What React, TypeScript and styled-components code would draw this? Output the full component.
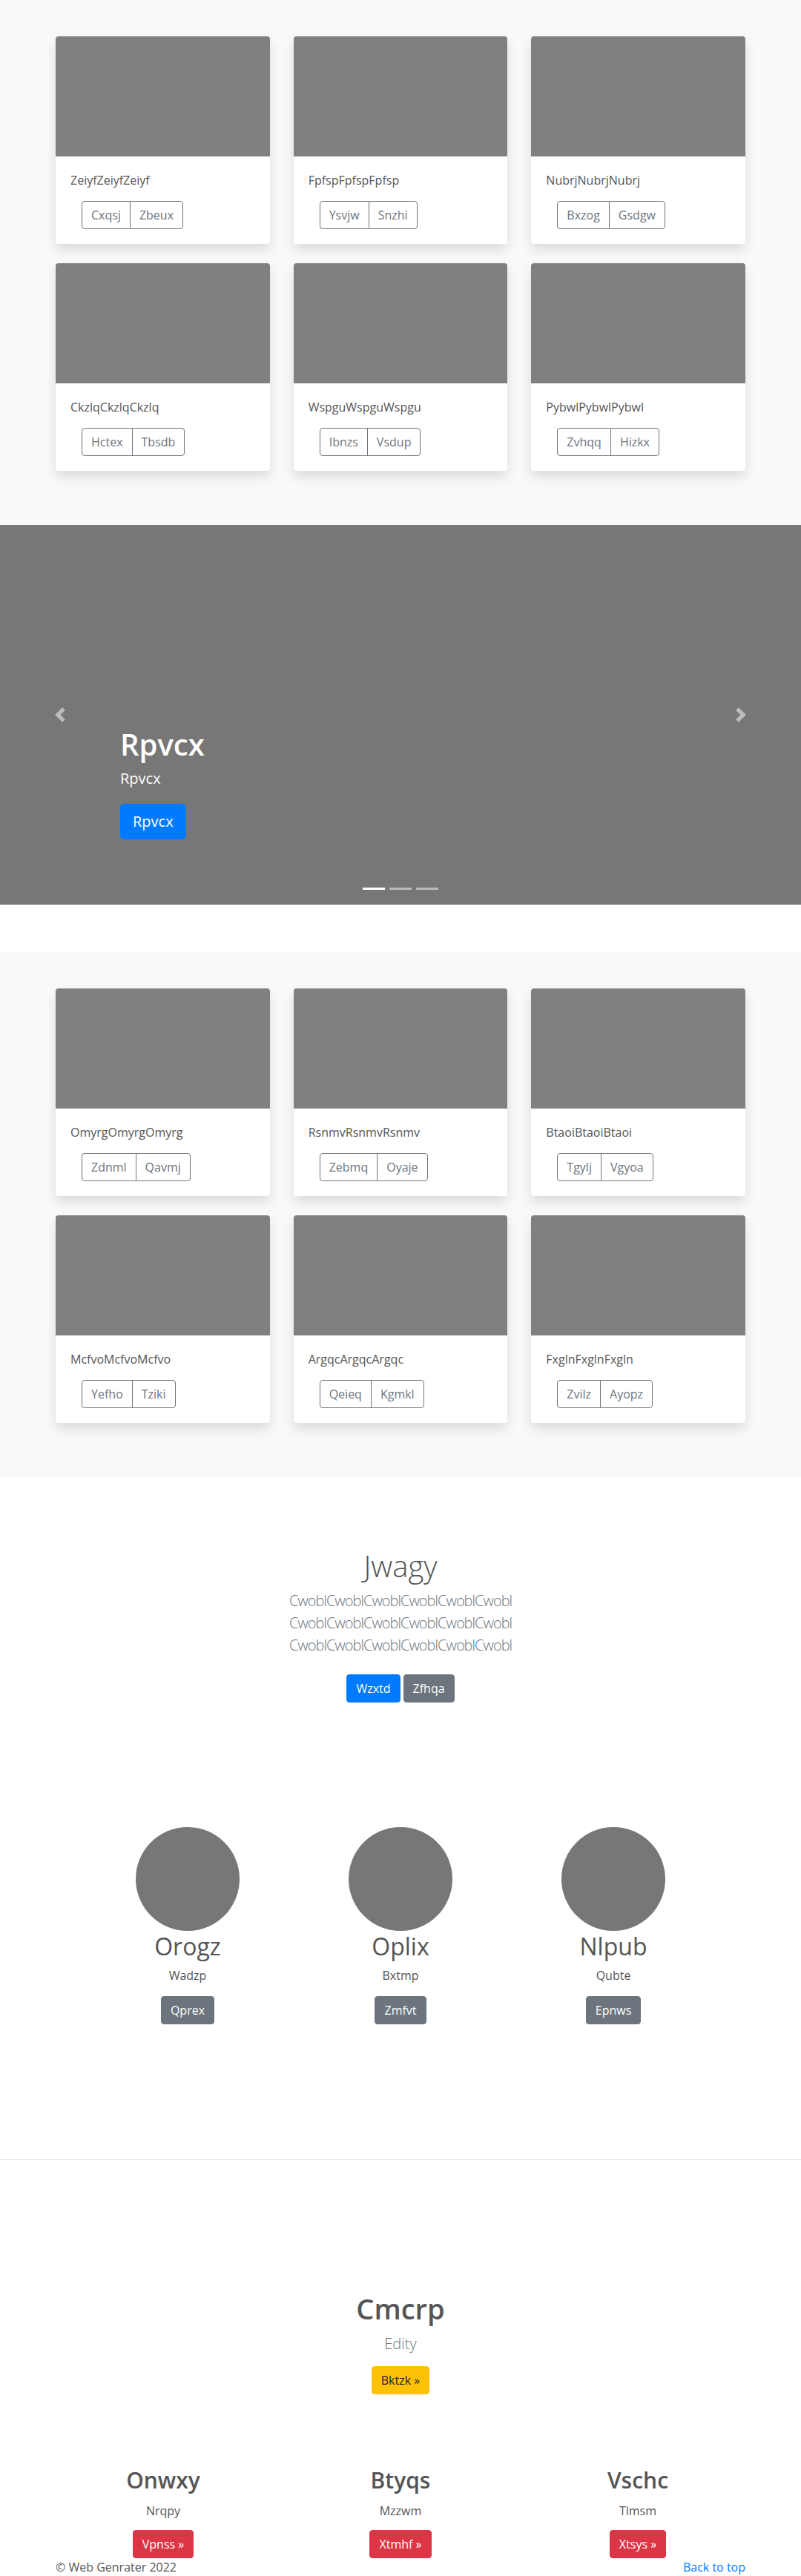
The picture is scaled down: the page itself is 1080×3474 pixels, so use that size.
import React from "react";
import styled, { createGlobalStyle } from "styled-components";

const GlobalStyle = createGlobalStyle`
  html, body { margin: 0; padding: 0; }
  body {
    font-family: "Open Sans", "Noto Sans", sans-serif;
    font-size: 16px;
    line-height: 1.5;
    color: #555;
    background: #fff;
  }
  * { box-sizing: border-box; }
  h1, h2, h3, p { margin: 0; }
`;

const Container = styled.div<{ $w?: number }>`
  width: ${(p) => p.$w ?? 930}px;
  margin: 0 auto;
`;

/* ---------- Album ---------- */
const AlbumSection = styled.section<{ $mt?: number }>`
  background: #f8f9fa;
  padding: 49px 0 49px;
  margin-top: ${(p) => p.$mt ?? 0}px;
`;

const CardGrid = styled.div`
  display: grid;
  grid-template-columns: repeat(3, 1fr);
  column-gap: 32px;
  row-gap: 26px;
  padding-bottom: 24px;
`;

const Card = styled.div`
  background: #fff;
  border-radius: 4px;
  height: 280px;
  overflow: hidden;
  box-shadow: 0 8px 16px rgba(0, 0, 0, 0.12);
  display: flex;
  flex-direction: column;
`;

const CardImage = styled.div`
  height: 162px;
  background: #808080;
`;

const CardBody = styled.div`
  padding: 20px;
`;

const CardText = styled.p`
  font-size: 16px;
  line-height: 24px;
  color: #555;
  margin-bottom: 16px;
`;

const BtnGroup = styled.div`
  display: inline-flex;
  margin-left: 15px;
`;

const OutlineBtn = styled.button`
  font-family: inherit;
  font-size: 16px;
  line-height: 24px;
  padding: 6px 12px;
  height: 38px;
  background: transparent;
  color: #6c757d;
  border: 1px solid #6c757d;
  border-radius: 0;
  &:first-child {
    border-radius: 4px 0 0 4px;
  }
  &:last-child {
    border-radius: 0 4px 4px 0;
    margin-left: -1px;
  }
`;

/* ---------- Carousel ---------- */
const Carousel = styled.div`
  position: relative;
  height: 512px;
  background: #777;
  overflow: hidden;
`;

const Caption = styled.div`
  position: absolute;
  left: 162px;
  bottom: 88px;
  color: #fff;
`;

const CaptionTitle = styled.h1`
  font-size: 40px;
  line-height: 48px;
  font-weight: 600;
  margin-bottom: 7px;
`;

const CaptionText = styled.p`
  font-size: 20px;
  line-height: 30px;
  margin-bottom: 19px;
`;

const Btn = styled.button<{ $bg: string; $fg?: string; $lg?: boolean }>`
  font-family: inherit;
  font-size: ${(p) => (p.$lg ? 20 : 16)}px;
  line-height: ${(p) => (p.$lg ? 30 : 24)}px;
  padding: ${(p) => (p.$lg ? "8px 16px" : "6px 12px")};
  background: ${(p) => p.$bg};
  color: ${(p) => p.$fg ?? "#fff"};
  border: 1px solid ${(p) => p.$bg};
  border-radius: ${(p) => (p.$lg ? 5 : 4)}px;
`;

const Control = styled.div<{ $side: "left" | "right" }>`
  position: absolute;
  top: 0;
  bottom: 0;
  ${(p) => p.$side}: 0;
  width: 15%;
  display: flex;
  align-items: center;
  justify-content: center;
  opacity: 0.5;
`;

const Indicators = styled.div`
  position: absolute;
  left: 0;
  right: 0;
  bottom: 20px;
  display: flex;
  justify-content: center;
  gap: 6px;
`;

const Indicator = styled.span<{ $active?: boolean }>`
  width: 30px;
  height: 3px;
  background: #fff;
  opacity: ${(p) => (p.$active ? 1 : 0.5)};
`;

/* ---------- Jumbotron ---------- */
const Jumbo = styled.section`
  padding: 96px 0 8px;
  text-align: center;
`;

const JumboTitle = styled.h1`
  font-size: 40px;
  line-height: 48px;
  font-weight: 300;
  color: #555;
  margin-bottom: 8px;
`;

const Lead = styled.p`
  font-size: 20px;
  line-height: 30px;
  font-weight: 300;
  letter-spacing: -1px;
  color: #6c757d;
  max-width: 500px;
  margin: 0 auto 16px;
`;

const BtnRow = styled.div`
  display: flex;
  justify-content: center;
  gap: 4px;
  padding-top: 8px;
`;

/* ---------- Marketing ---------- */
const Marketing = styled.div`
  display: grid;
  grid-template-columns: repeat(3, 287px);
  justify-content: center;
  padding-top: 160px;
  text-align: center;
`;

const Col = styled.div`
  display: flex;
  flex-direction: column;
  align-items: center;
`;

const Circle = styled.div`
  width: 140px;
  height: 140px;
  border-radius: 50%;
  background: #777;
  margin-bottom: 2px;
`;

const MarketTitle = styled.h2`
  font-size: 32px;
  line-height: 38px;
  font-weight: 400;
  color: #555;
  margin-bottom: 8px;
`;

const SmallText = styled.p`
  font-size: 16px;
  line-height: 24px;
  color: #555;
  margin-bottom: 16px;
`;

const Divider = styled.hr`
  margin: 182px 0 0;
  border: 0;
  border-top: 1px solid #e5e5e5;
`;

/* ---------- Feature ---------- */
const Feature = styled.section`
  padding-top: 177px;
  text-align: center;
  display: flex;
  flex-direction: column;
  align-items: center;
`;

const FeatureTitle = styled.h2`
  font-size: 38px;
  line-height: 46px;
  font-weight: 600;
  color: #555;
  margin-bottom: 10px;
`;

const FeatureLead = styled.p`
  font-size: 20px;
  line-height: 30px;
  font-weight: 300;
  color: #6c757d;
  margin-bottom: 15px;
`;

const BottomRow = styled.div`
  display: grid;
  grid-template-columns: repeat(3, 320px);
  justify-content: center;
  padding-top: 98px;
  text-align: center;
`;

const BottomTitle = styled.h2`
  font-size: 30px;
  line-height: 36px;
  font-weight: 600;
  color: #555;
  margin-bottom: 11px;
`;

const BottomText = styled.p`
  font-size: 16px;
  line-height: 24px;
  color: #555;
  margin-bottom: 14px;
`;

const Footer = styled.footer`
  display: flex;
  justify-content: space-between;
  font-size: 16px;
  line-height: 24px;
  color: #555;
`;

const FooterLink = styled.a`
  color: #007bff;
  text-decoration: none;
`;

type CardData = { title: string; btns: [string, string] };

const album1: CardData[] = [
  { title: "ZeiyfZeiyfZeiyf", btns: ["Cxqsj", "Zbeux"] },
  { title: "FpfspFpfspFpfsp", btns: ["Ysvjw", "Snzhi"] },
  { title: "NubrjNubrjNubrj", btns: ["Bxzog", "Gsdgw"] },
  { title: "CkzlqCkzlqCkzlq", btns: ["Hctex", "Tbsdb"] },
  { title: "WspguWspguWspgu", btns: ["Ibnzs", "Vsdup"] },
  { title: "PybwlPybwlPybwl", btns: ["Zvhqq", "Hizkx"] },
];

const album2: CardData[] = [
  { title: "OmyrgOmyrgOmyrg", btns: ["Zdnml", "Qavmj"] },
  { title: "RsnmvRsnmvRsnmv", btns: ["Zebmq", "Oyaje"] },
  { title: "BtaoiBtaoiBtaoi", btns: ["Tgylj", "Vgyoa"] },
  { title: "McfvoMcfvoMcfvo", btns: ["Yefho", "Tziki"] },
  { title: "ArgqcArgqcArgqc", btns: ["Qeieq", "Kgmkl"] },
  { title: "FxglnFxglnFxgln", btns: ["Zvilz", "Ayopz"] },
];

const Album: React.FC<{ items: CardData[]; mt?: number }> = ({ items, mt }) => (
  <AlbumSection $mt={mt}>
    <Container>
      <CardGrid>
        {items.map((c) => (
          <Card key={c.title}>
            <CardImage />
            <CardBody>
              <CardText>{c.title}</CardText>
              <BtnGroup>
                <OutlineBtn>{c.btns[0]}</OutlineBtn>
                <OutlineBtn>{c.btns[1]}</OutlineBtn>
              </BtnGroup>
            </CardBody>
          </Card>
        ))}
      </CardGrid>
    </Container>
  </AlbumSection>
);

const Chevron: React.FC<{ dir: "prev" | "next" }> = ({ dir }) => (
  <svg width="20" height="20" viewBox="0 0 8 8" fill="#fff">
    {dir === "prev" ? (
      <path d="M5.25 0l-4 4 4 4 1.5-1.5L4.25 4l2.5-2.5L5.25 0z" />
    ) : (
      <path d="M2.75 0l-1.5 1.5L3.75 4l-2.5 2.5L2.75 8l4-4-4-4z" />
    )}
  </svg>
);

const people = [
  { name: "Orogz", sub: "Wadzp", btn: "Qprex" },
  { name: "Oplix", sub: "Bxtmp", btn: "Zmfvt" },
  { name: "Nlpub", sub: "Qubte", btn: "Epnws" },
];

const bottoms = [
  { name: "Onwxy", sub: "Nrqpy", btn: "Vpnss »" },
  { name: "Btyqs", sub: "Mzzwm", btn: "Xtmhf »" },
  { name: "Vschc", sub: "Tlmsm", btn: "Xtsys »" },
];

export default function App() {
  return (
    <>
      <GlobalStyle />
      <Album items={album1} />

      <Carousel>
        <Control $side="left">
          <Chevron dir="prev" />
        </Control>
        <Control $side="right">
          <Chevron dir="next" />
        </Control>
        <Caption>
          <CaptionTitle>Rpvcx</CaptionTitle>
          <CaptionText>Rpvcx</CaptionText>
          <Btn $bg="#007bff" $lg>
            Rpvcx
          </Btn>
        </Caption>
        <Indicators>
          <Indicator $active />
          <Indicator />
          <Indicator />
        </Indicators>
      </Carousel>

      <Album items={album2} mt={64} />

      <Jumbo>
        <JumboTitle>Jwagy</JumboTitle>
        <Lead>
          CwoblCwoblCwoblCwoblCwoblCwobl CwoblCwoblCwoblCwoblCwoblCwobl
          CwoblCwoblCwoblCwoblCwoblCwobl
        </Lead>
        <BtnRow>
          <Btn $bg="#007bff">Wzxtd</Btn>
          <Btn $bg="#6c757d">Zfhqa</Btn>
        </BtnRow>
      </Jumbo>

      <Marketing>
        {people.map((p) => (
          <Col key={p.name}>
            <Circle />
            <MarketTitle>{p.name}</MarketTitle>
            <SmallText>{p.sub}</SmallText>
            <Btn $bg="#6c757d">{p.btn}</Btn>
          </Col>
        ))}
      </Marketing>

      <Divider />

      <Feature>
        <FeatureTitle>Cmcrp</FeatureTitle>
        <FeatureLead>Edity</FeatureLead>
        <Btn $bg="#ffc107" $fg="#212529">
          Bktzk »
        </Btn>
      </Feature>

      <BottomRow>
        {bottoms.map((b) => (
          <Col key={b.name}>
            <BottomTitle>{b.name}</BottomTitle>
            <BottomText>{b.sub}</BottomText>
            <Btn $bg="#dc3545">{b.btn}</Btn>
          </Col>
        ))}
      </BottomRow>

      <Container>
        <Footer>
          <span>© Web Genrater 2022</span>
          <FooterLink href="#">Back to top</FooterLink>
        </Footer>
      </Container>
    </>
  );
}
